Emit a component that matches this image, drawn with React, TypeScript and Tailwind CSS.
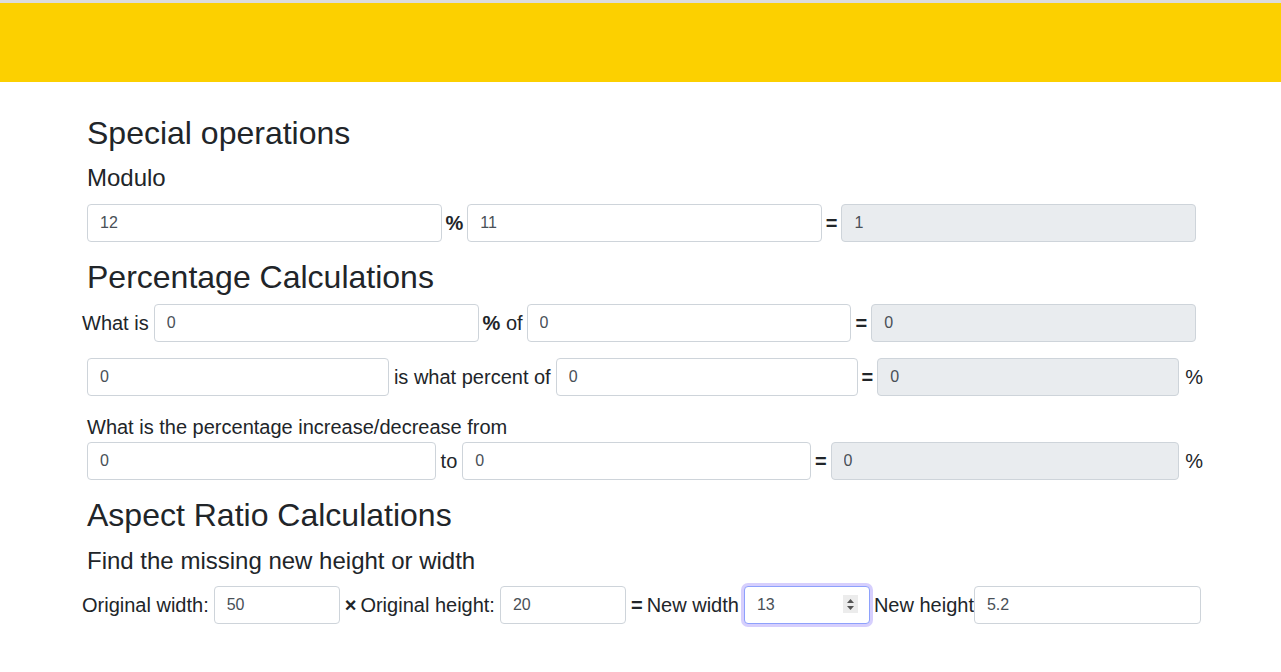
import React from "react"

const font = { fontFamily: '"Liberation Sans", Arial, sans-serif' }

function Field({
  value,
  readOnly,
  className = "",
}: {
  value: string
  readOnly?: boolean
  className?: string
}) {
  return (
    <input
      defaultValue={value}
      readOnly={readOnly}
      className={
        "h-[38px] min-w-0 rounded-[4px] border border-[#ced4da] px-3 text-[16px] text-[#495057] outline-none " +
        (readOnly ? "bg-[#e9ecef] " : "bg-white ") +
        className
      }
    />
  )
}

function Label({
  children,
  bold,
  className = "px-[4px]",
}: {
  children: React.ReactNode
  bold?: boolean
  className?: string
}) {
  return (
    <span
      className={
        "whitespace-nowrap text-[20px] leading-[30px] text-[#212529] " +
        (bold ? "font-bold " : "") +
        className
      }
    >
      {children}
    </span>
  )
}

// focused number input with the spinner showing
function FocusedField({ value }: { value: string }) {
  return (
    <div className="relative flex h-[38px] w-[126px] items-center rounded-[4px] border border-[#8ea1fc] bg-white pl-3 shadow-[0_0_0_3px_#d6cffd]">
      <span className="text-[16px] text-[#495057]">{value}</span>
      <div className="absolute right-[11px] top-[8px] flex h-[18px] w-[15px] flex-col items-center justify-center gap-[3px] bg-[#ececec]">
        <svg width="7" height="4" viewBox="0 0 7 4">
          <path d="M3.5 0L7 4H0z" fill="#555" />
        </svg>
        <svg width="7" height="4" viewBox="0 0 7 4">
          <path d="M0 0h7L3.5 4z" fill="#555" />
        </svg>
      </div>
    </div>
  )
}

export default function App() {
  return (
    <div className="min-h-screen bg-white" style={font}>
      <header className="h-[82px] border-t-[3px] border-[#dcdcdc] bg-[#fcd000]" />

      <main className="ml-[87px] w-[1109px] pt-[32px] text-[#212529]">
        <h2 className="text-[32px] leading-[38px]">Special operations</h2>
        <h4 className="mt-[11px] text-[24px] leading-[29px]">Modulo</h4>
        <div className="mt-[12px] flex items-center">
          <Field value="12" className="flex-1" />
          <Label bold>%</Label>
          <Field value="11" className="flex-1" />
          <Label bold>=</Label>
          <Field value="1" readOnly className="flex-1" />
        </div>

        <h2 className="mt-[16px] text-[32px] leading-[38px]">Percentage Calculations</h2>
        <div className="-ml-[5px] mt-[8px] flex w-[1114px] items-center">
          <Label className="pr-[5px]">What is</Label>
          <Field value="0" className="flex-1" />
          <Label>
            <b>%</b> of
          </Label>
          <Field value="0" className="flex-1" />
          <Label bold>=</Label>
          <Field value="0" readOnly className="flex-1" />
        </div>

        <div className="mt-[16px] flex w-[1116px] items-center">
          <Field value="0" className="flex-1" />
          <Label className="px-[5px]">is what percent of</Label>
          <Field value="0" className="flex-1" />
          <Label bold>=</Label>
          <Field value="0" readOnly className="flex-1" />
          <Label className="pl-[6px]">%</Label>
        </div>

        <p className="mt-[16px] text-[20px] leading-[30px]">
          What is the percentage increase/decrease from
        </p>
        <div className="flex w-[1116px] items-center">
          <Field value="0" className="flex-1" />
          <Label className="px-[5px]">to</Label>
          <Field value="0" className="flex-1" />
          <Label bold>=</Label>
          <Field value="0" readOnly className="flex-1" />
          <Label className="pl-[6px]">%</Label>
        </div>

        <h2 className="mt-[16px] text-[32px] leading-[38px]">Aspect Ratio Calculations</h2>
        <h4 className="mt-[12px] text-[24px] leading-[29px]">
          Find the missing new height or width
        </h4>
        <div className="-ml-[5px] mt-[11px] flex w-[1119px] items-center">
          <Label className="pr-[5px]">Original width:</Label>
          <Field value="50" className="w-[126px]" />
          <Label bold className="pl-[5px] pr-[4px]">×</Label>
          <Label className="pr-[5px]">Original height:</Label>
          <Field value="20" className="w-[126px]" />
          <Label bold className="pl-[5px] pr-[4px]">=</Label>
          <Label className="pr-[5px]">New width</Label>
          <FocusedField value="13" />
          <Label className="pl-[4px]">New height</Label>
          <Field value="5.2" className="flex-1" />
        </div>
      </main>
    </div>
  )
}
